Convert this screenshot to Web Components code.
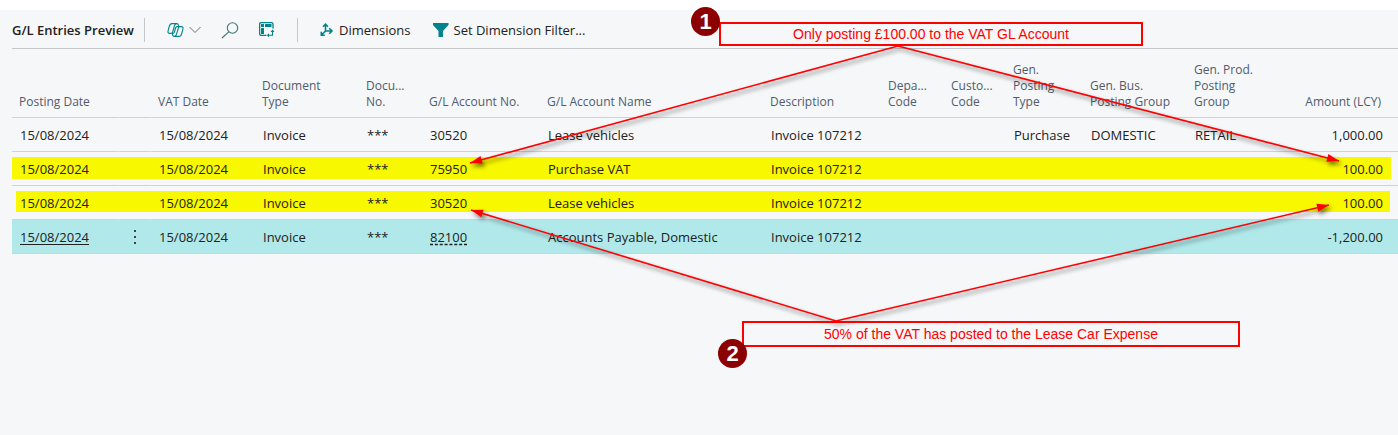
<!DOCTYPE html>
<html lang="en">
<head>
<meta charset="utf-8">
<title>G/L Entries Preview</title>
<style>
  body {
    margin: 0;
    background: #fff;
    color: #212121;
    font-family: "Open Sans", "Noto Sans", sans-serif;
    font-size: 13px;
  }
</style>
</head>
<body>
<entries-page>
  <action-bar slot="actions" heading="G/L Entries Preview"></action-bar>
  <entries-grid></entries-grid>
  <note-layer slot="notes">
    <note-box style="left: 719px; top: 22px; width: 424px; height: 24px">Only posting £100.00 to the VAT GL Account</note-box>
    <note-box style="left: 742px; top: 321px; width: 498px; height: 26px">50% of the VAT has posted to the Lease Car Expense</note-box>
    <note-badge style="left: 691px; top: 7px">1</note-badge>
    <note-badge style="left: 718px; top: 339px">2</note-badge>
  </note-layer>
</entries-page>

<script>
class EntriesPage extends HTMLElement {
  constructor() {
    super();
    this.attachShadow({ mode: 'open' });
  }

  connectedCallback() {
    this.shadowRoot.innerHTML = `
      <style>
        :host {
          display: block;
          position: relative;
          overflow: hidden;
          box-sizing: border-box;
          min-height: 100vh;
          padding-top: 10px;
        }
        main {
          box-sizing: border-box;
          min-height: calc(100vh - 10px);
          padding-left: 12px;
          background: #f6f7f9;
        }
      </style>
      <main>
        <slot name="actions"></slot>
        <slot></slot>
      </main>
      <slot name="notes"></slot>
    `;
  }
}

const ICONS = {
  copilot: `<svg width="17" height="16" viewBox="0 0 18 16" fill="none" stroke="#00838a" stroke-width="1.2" stroke-linejoin="round">
    <path d="M5.2 1.2h5.2c1 0 1.4.6 1.7 1.7l.4 1.3M5.2 1.2C3.7 1.2 3 2.2 2.5 4L1.2 8.600c-.5 2 .1 3 1.700 3h1.800"/>
    <path d="M12.800 14.800H7.600c-1 0-1.400-.6-1.700-1.700l-.4-1.300M12.800 14.800c1.500 0 2.200-1 2.700-2.800l1.300-4.600c.5-2-.1-3-1.700-3h-1.800"/>
    <path d="M9.800 1.200c-1 .2-1.500 1-1.900 2.400L6 10c-.4 1.200-.6 1.600-1.400 1.600M8.200 14.800c1-.2 1.500-1 1.900-2.400L12 6c.4-1.200.6-1.600 1.400-1.600h-2.600c-1 0-1.400.5-1.700 1.500l-1.300 4.300c-.3 1-.8 1.400-1.700 1.400h-.8"/></svg>`,
  chevron: `<svg width="12" height="8" viewBox="0 0 12 8" fill="none" stroke="#707070"><path d="M.5 1 6 6.500 11.500 1"/></svg>`,
  search: `<svg width="18" height="17" viewBox="0 0 18 17" fill="none" stroke="#40767a" stroke-width="1.100"><circle cx="11.500" cy="6" r="5.200"/><path d="M7.800 9.800 1 16"/></svg>`,
  personalize: `<svg width="16" height="16" viewBox="0 0 16 16" fill="none" stroke="#00838a" stroke-width="1.300">
    <path d="M7.500 13.400H2.200A1.600 1.600 0 0 1 .6 11.800V2.200A1.600 1.600 0 0 1 2.200.6h10.200A1.600 1.600 0 0 1 14 2.200V6.500"/>
    <path d="M2 2h3v3H2zM6 2h2.500v3H6zM8.500 2h4v3h-4zM2 6h3v6H2z" fill="#00838a" stroke="none"/>
    <path d="M13.500 9v4.300H9" stroke-width="1.100"/>
    <path d="M11.500 10 13.500 7.600 15.500 10zM10 11.300v4L7.800 13.300z" fill="#00838a" stroke="none"/></svg>`,
  dimensions: `<svg width="14" height="14" viewBox="0 0 14 14" fill="none" stroke="#00838a" stroke-width="1.600">
    <path d="M5.500 1.200V8H12M5.500 8l-4 4M3 3.700l2.500-2.500L8 3.700M9.200 5.200 12 8l-2.800 2.800M1.300 8.800v3.500H4.800"/></svg>`,
  filter: `<svg width="16" height="14" viewBox="0 0 16 14" fill="#00838a"><path d="M0 0h15.500v2L10 8v6H5.500V8L0 2z"/></svg>`
};

class ActionBar extends HTMLElement {
  constructor() {
    super();
    this.attachShadow({ mode: 'open' });
  }

  connectedCallback() {
    this.shadowRoot.innerHTML = `
      <style>
        :host {
          display: flex;
          align-items: center;
          height: 36px;
          padding-top: 2px;
          border-bottom: 1px solid #c3c6ca;
          white-space: nowrap;
        }
        h1 {
          width: 132px;
          margin: 0;
          font-size: 13px;
          font-weight: 600;
        }
        .group {
          display: flex;
          align-items: center;
          box-sizing: border-box;
          height: 24px;
          border-left: 1px solid #c3c6ca;
          padding-left: 22px;
        }
        .tools {
          width: 153px;
          gap: 20px;
        }
        button {
          display: flex;
          align-items: center;
          gap: 5px;
          padding: 0;
          border: 0;
          background: none;
          color: inherit;
          font: inherit;
        }
        .labelled {
          gap: 22px;
        }
        svg {
          display: block;
        }
      </style>
      <h1>${this.getAttribute('heading')}</h1>
      <div class="group tools">
        <button aria-label="Copilot">${ICONS.copilot}${ICONS.chevron}</button>
        <button aria-label="Search">${ICONS.search}</button>
        <button aria-label="Personalize">${ICONS.personalize}</button>
      </div>
      <div class="group labelled">
        <button>${ICONS.dimensions}Dimensions</button>
        <button>${ICONS.filter}Set Dimension Filter...</button>
      </div>
    `;
  }
}

const COLUMNS = [
  { key: 'postingDate', label: 'Posting Date', width: 106 },
  { key: 'menu', label: '', width: 33 },
  { key: 'vatDate', label: 'VAT Date', width: 104 },
  { key: 'docType', label: 'Document<br>Type', width: 104 },
  { key: 'docNo', label: 'Docu...<br>No.', width: 63 },
  { key: 'account', label: 'G/L Account No.', width: 118 },
  { key: 'name', label: 'G/L Account Name', width: 223 },
  { key: 'description', label: 'Description', width: 118 },
  { key: 'department', label: 'Depa...<br>Code', width: 63 },
  { key: 'customer', label: 'Custo...<br>Code', width: 62 },
  { key: 'postingType', label: 'Gen.<br>Posting<br>Type', width: 77 },
  { key: 'busGroup', label: 'Gen. Bus.<br>Posting Group', width: 104 },
  { key: 'prodGroup', label: 'Gen. Prod.<br>Posting<br>Group', width: 100 },
  { key: 'amount', label: 'Amount (LCY)' }
];

const COMMON = {
  postingDate: '15/08/2024',
  vatDate: '15/08/2024',
  docType: 'Invoice',
  docNo: '***',
  description: 'Invoice 107212'
};

const ENTRIES = [
  { ...COMMON, account: '30520', name: 'Lease vehicles', postingType: 'Purchase', busGroup: 'DOMESTIC', prodGroup: 'RETAIL', amount: '1,000.00' },
  { ...COMMON, account: '75950', name: 'Purchase VAT', amount: '100.00', state: 'marked' },
  { ...COMMON, account: '30520', name: 'Lease vehicles', amount: '100.00', state: 'marked inset' },
  { ...COMMON, account: '82100', name: 'Accounts Payable, Domestic', amount: '-1,200.00', state: 'selected' }
];

class EntriesGrid extends HTMLElement {
  constructor() {
    super();
    this.attachShadow({ mode: 'open' });
  }

  connectedCallback() {
    this.shadowRoot.innerHTML = `
      <style>
        :host {
          display: block;
        }
        table {
          width: 100%;
          table-layout: fixed;
          border-spacing: 0;
        }
        th, td {
          box-sizing: border-box;
          border-bottom: 1px solid #d0d2d5;
          text-align: left;
          white-space: nowrap;
        }
        th {
          height: 69px;
          padding: 0 0 7px 7px;
          vertical-align: bottom;
          color: #505c6d;
          font-size: 12px;
          font-weight: 400;
          line-height: 16px;
        }
        td {
          height: 34px;
          padding: 0 0 0 8px;
        }
        .menu {
          border-left: 1px solid transparent;
          border-right: 1px solid transparent;
        }
        th.amount {
          padding-right: 17px;
          text-align: right;
        }
        td.amount {
          padding-right: 15px;
          text-align: right;
        }
        .marked {
          background: linear-gradient(#f8f800, #f8f800) no-repeat 0 5px / calc(100% - 7px) 22px;
        }
        .inset {
          background-position: 4px 5px;
          background-size: calc(100% - 12px) 21px;
        }
        .selected {
          background: #b1e9eb;
        }
        a {
          color: inherit;
          text-underline-offset: 2px;
        }
        .account a {
          text-decoration: underline dashed;
        }
        button {
          display: block;
          padding: 0 0 0 5px;
          border: 0;
          background: none;
        }
        svg {
          display: block;
        }
      </style>
      <table>
        <colgroup>${COLUMNS.map(c => `<col${c.width ? ` style="width: ${c.width}px"` : ''}>`).join('')}</colgroup>
        <thead>
          <tr>${COLUMNS.map(c => `<th class="${c.key}">${c.label}</th>`).join('')}</tr>
        </thead>
        <tbody>${ENTRIES.map(entry => this.renderRow(entry)).join('')}</tbody>
      </table>
    `;
  }

  renderRow(entry) {
    const cells = COLUMNS.map(c => `<td class="${c.key}">${this.renderCell(entry, c.key)}</td>`);
    return `<tr class="${entry.state || ''}">${cells.join('')}</tr>`;
  }

  renderCell(entry, key) {
    const value = entry[key] || '';
    if (entry.state !== 'selected') return value;
    if (key === 'postingDate' || key === 'account') return `<a href="#">${value}</a>`;
    if (key === 'menu') {
      return `<button aria-label="Show more options"><svg width="6" height="16" fill="#444"><path d="M2 1h2v2H2zM2 7h2v2H2zM2 13h2v2H2z"/></svg></button>`;
    }
    return value;
  }
}

// Arrows start at a note box and end at the value it is about
const ARROWS = [
  [898, 46, 470, 163],
  [898, 46, 1339, 161],
  [836, 321, 471, 210],
  [836, 321, 1329, 205]
];

class NoteLayer extends HTMLElement {
  constructor() {
    super();
    this.attachShadow({ mode: 'open' });
  }

  connectedCallback() {
    this.shadowRoot.innerHTML = `
      <style>
        :host {
          position: absolute;
          inset: 0;
          pointer-events: none;
        }
        svg {
          display: block;
          overflow: visible;
          filter: drop-shadow(2px 3px 2px rgba(0, 0, 0, 0.55));
        }
      </style>
      <svg width="1398" height="435" fill="#f00" stroke="#f00" stroke-width="1.600">
        ${ARROWS.map(a => this.renderArrow(...a)).join('')}
      </svg>
      <slot></slot>
    `;
  }

  renderArrow(x1, y1, x2, y2) {
    const angle = Math.atan2(y2 - y1, x2 - x1) * 180 / Math.PI;
    return `
      <line x1="${x1}" y1="${y1}" x2="${x2}" y2="${y2}"/>
      <path d="M0 0-12-4v8z" stroke="none" transform="translate(${x2} ${y2}) rotate(${angle})"/>`;
  }
}

class NoteBox extends HTMLElement {
  constructor() {
    super();
    this.attachShadow({ mode: 'open' });
  }

  connectedCallback() {
    this.shadowRoot.innerHTML = `
      <style>
        :host {
          position: absolute;
          display: flex;
          align-items: center;
          justify-content: center;
          box-sizing: border-box;
          border: 2px solid #f00;
          color: #f00;
          font-family: "Liberation Sans", Arial, sans-serif;
          font-size: 14px;
          white-space: nowrap;
        }
      </style>
      <slot></slot>
    `;
  }
}

class NoteBadge extends HTMLElement {
  constructor() {
    super();
    this.attachShadow({ mode: 'open' });
  }

  connectedCallback() {
    this.shadowRoot.innerHTML = `
      <style>
        :host {
          position: absolute;
          display: flex;
          align-items: center;
          justify-content: center;
          width: 29px;
          height: 29px;
          border-radius: 50%;
          background: #8b0000;
          color: #fff;
          font-family: "Liberation Sans", Arial, sans-serif;
          font-size: 22px;
          font-weight: 700;
          line-height: 1;
        }
      </style>
      <slot></slot>
    `;
  }
}

customElements.define('entries-page', EntriesPage);
customElements.define('action-bar', ActionBar);
customElements.define('entries-grid', EntriesGrid);
customElements.define('note-layer', NoteLayer);
customElements.define('note-box', NoteBox);
customElements.define('note-badge', NoteBadge);
</script>
</body>
</html>
